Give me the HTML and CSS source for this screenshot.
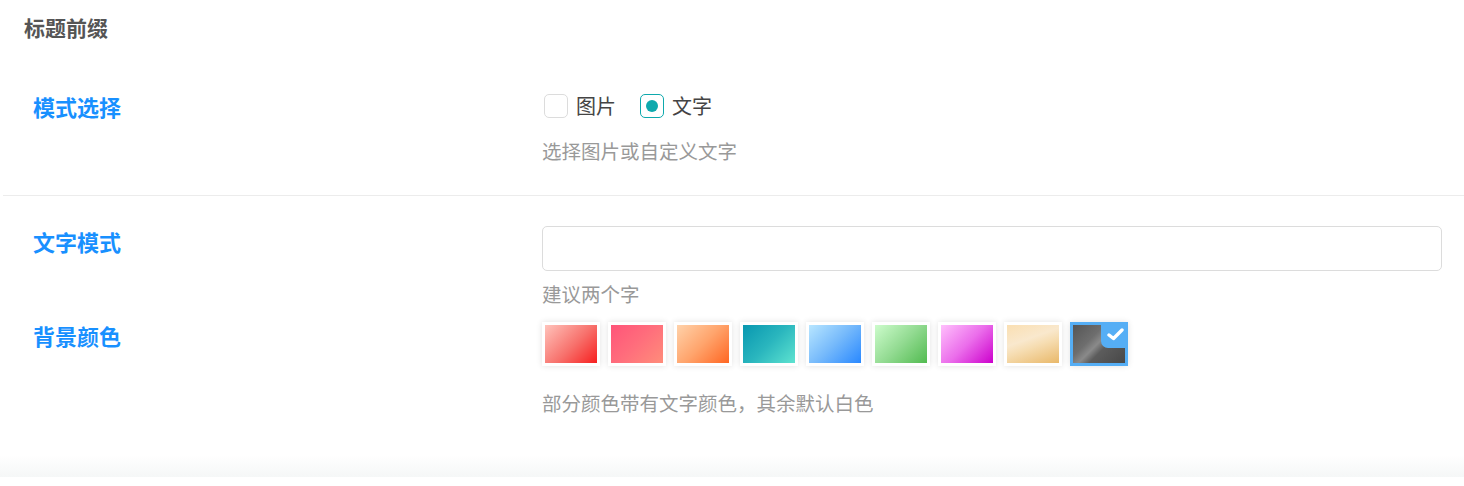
FILE: index.html
```html
<!DOCTYPE html>
<html lang="zh">
<head>
<meta charset="utf-8">
<title>标题前缀</title>
<link rel="stylesheet" href="styles.css">
</head>
<body>
<div class="page">
  <div class="header">标题前缀</div>

  <div class="section first">
    <div class="row">
      <div class="label">模式选择</div>
      <div class="content">
        <div class="radios">
          <label class="radio"><span class="box"></span><span class="rtext">图片</span></label>
          <label class="radio checked"><span class="box"><span class="dot"></span></span><span class="rtext">文字</span></label>
        </div>
        <div class="help help1">选择图片或自定义文字</div>
      </div>
    </div>
  </div>

  <div class="section second">
    <div class="row">
      <div class="label label-input">文字模式</div>
      <div class="content">
        <input class="text-input" type="text">
        <div class="help help2">建议两个字</div>
      </div>
    </div>
    <div class="row row3">
      <div class="label">背景颜色</div>
      <div class="content">
        <div class="swatches">
          <div class="swatch"><div class="fill c1"></div></div>
          <div class="swatch"><div class="fill c2"></div></div>
          <div class="swatch"><div class="fill c3"></div></div>
          <div class="swatch"><div class="fill c4"></div></div>
          <div class="swatch"><div class="fill c5"></div></div>
          <div class="swatch"><div class="fill c6"></div></div>
          <div class="swatch"><div class="fill c7"></div></div>
          <div class="swatch"><div class="fill c8"></div></div>
          <div class="swatch selected"><div class="fill c9"></div>
            <span class="badge"><svg width="17" height="15" viewBox="0 0 17 15"><path d="M2 8 L6.5 11.5 L15 3" fill="none" stroke="#fff" stroke-width="3.4" stroke-linecap="round" stroke-linejoin="round"/></svg></span>
          </div>
        </div>
        <div class="help help3">部分颜色带有文字颜色，其余默认白色</div>
      </div>
    </div>
  </div>
  <div class="footer-shade"></div>
</div>
</body>
</html>
```

FILE: styles.css
```css
* { box-sizing: border-box; }
html, body { margin: 0; padding: 0; background: #fff; }
body {
  font-family: "Noto Sans CJK SC", "Noto Sans", sans-serif;
  color: #333;
  width: 1464px;
  height: 486px;
  overflow: hidden;
}
.header {
  padding: 11px 24px 0;
  height: 60px;
  font-size: 21px;
  line-height: 32px;
  font-weight: 700;
  color: #555;
}
.section.first {
  margin-left: 3px;
  border-bottom: 1px solid #ececec;
  padding-top: 33px;
  height: 136px;
}
.row {
  display: flex;
}
.label {
  width: 539px;
  padding-left: 30px;
  font-size: 22px;
  line-height: 30px;
  font-weight: 700;
  color: #1890ff;
  flex: none;
}
.first .label { padding-left: 30px; margin-top: -2px; }
.second .label { width: 542px; padding-left: 33px; }
.content { flex: 1; }
.radios {
  display: flex;
  align-items: center;
  height: 26px;
  padding-left: 2px;
}
.radio {
  display: flex;
  align-items: center;
  margin-right: 24px;
}
.box {
  width: 24px;
  height: 24px;
  border: 1px solid #dcdcdc;
  border-radius: 5px;
  background: #fff;
  display: flex;
  align-items: center;
  justify-content: center;
}
.checked .box { border-color: #0ea9ad; }
.dot {
  width: 12px;
  height: 12px;
  border-radius: 50%;
  background: #0ea9ad;
}
.rtext {
  margin-left: 8px;
  font-size: 20px;
  line-height: 26px;
  color: #444;
}
.help {
  font-size: 19.5px;
  line-height: 28px;
  color: #999;
}
.help1 { margin-top: 18px; }
.second { padding-top: 30px; }
.label-input { margin-top: 0; }
.second .content { padding-right: 22px; }
.text-input {
  display: block;
  width: 100%;
  height: 45px;
  border: 1px solid #dcdcdc;
  border-radius: 5px;
  background: #fff;
  outline: none;
  font: inherit;
}
.help2 { margin-top: 9px; }
.row3 { margin-top: 14px; }
.row3 .label { margin-top: -2px; }
.swatches {
  display: flex;
  gap: 8px;
}
.swatch {
  position: relative;
  width: 58px;
  height: 44px;
  padding: 3px;
  background: #fff;
  box-shadow: 0 0 6px rgba(0, 0, 0, 0.12);
}
.swatch.selected { background: #55aef5; }
.fill { width: 100%; height: 100%; }
.c1 { background: linear-gradient(135deg, #ffc3bb 0%, #f7706b 55%, #f71f1f 100%); }
.c2 { background: linear-gradient(135deg, #ff5479 0%, #ff6e7c 50%, #ff8d7a 100%); }
.c3 { background: linear-gradient(135deg, #ffd2aa 0%, #ffa46c 50%, #ff6622 100%); }
.c4 { background: linear-gradient(135deg, #0897b0 0%, #2ab6be 50%, #5ee3d0 100%); }
.c5 { background: linear-gradient(135deg, #b8e6ff 0%, #75b9fb 50%, #2988ff 100%); }
.c6 { background: linear-gradient(135deg, #cdfccc 0%, #93db92 50%, #52bb50 100%); }
.c7 { background: linear-gradient(135deg, #ffc0fc 0%, #eb6eeb 50%, #cc00cc 100%); }
.c8 { background: linear-gradient(160deg, #fadfb2 0%, #f9e8cd 38%, #f6ddb2 55%, #e9b869 100%); }
.c9 { background: linear-gradient(135deg, #555 0%, #6e6e6e 35%, #8a8a8a 48%, #5c5c5c 60%, #474747 100%); }
.badge {
  position: absolute;
  top: 0;
  right: 0;
  width: 27px;
  height: 26px;
  background: #55aef5;
  border-bottom-left-radius: 7px;
  display: flex;
  align-items: center;
  justify-content: center;
  padding: 0 0 2px 2px;
}
.help3 { margin-top: 23px; }
.footer-shade {
  margin-top: 38px;
  height: 22px;
  background: linear-gradient(to bottom, #ffffff, #f5f7f7);
}
```
